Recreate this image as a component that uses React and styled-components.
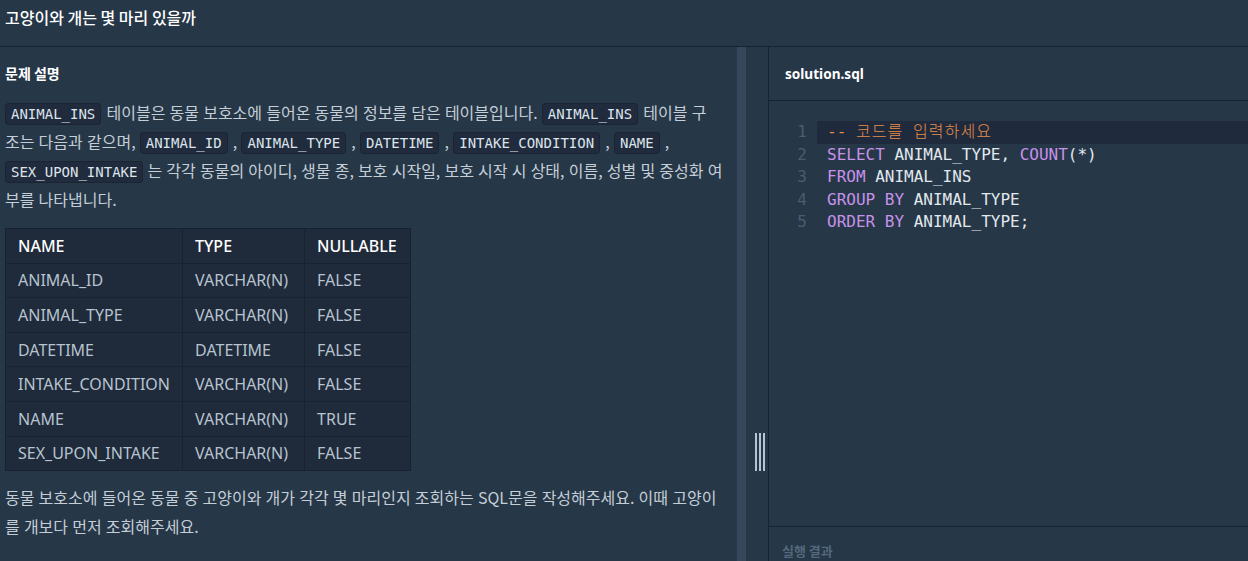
import React from "react";
import styled, { createGlobalStyle } from "styled-components";

const Global = createGlobalStyle`
  html, body { margin: 0; padding: 0; background: #263747; }
  body { font-family: "Noto Sans", "Noto Sans CJK KR", sans-serif; overflow: hidden; }
  * { box-sizing: border-box; }
`;

const Page = styled.div`
  width: 1248px;
  height: 561px;
  background: #263747;
  display: flex;
  flex-direction: column;
  overflow: hidden;
  color: #d5dde5;
`;

const TopBar = styled.header`
  height: 47px;
  flex: none;
  display: flex;
  align-items: center;
  padding: 0 5px 12px;
  border-bottom: 1px solid #172334;
`;

const Title = styled.h1`
  margin: 0;
  font-size: 16px;
  font-weight: 500;
  color: #ffffff;
  font-family: "Noto Sans CJK KR", sans-serif;
`;

const Main = styled.div`
  flex: 1;
  display: flex;
  min-height: 0;
`;

const LeftPane = styled.section`
  width: 737px;
  flex: none;
  padding: 14px 0 0 5px;
  overflow: hidden;
`;

const ScrollThumb = styled.div`
  width: 9px;
  flex: none;
  background: #36465b;
`;

const Divider = styled.div`
  width: 23px;
  flex: none;
  border-right: 1px solid #172334;
  display: flex;
  justify-content: center;
  padding-top: 386px;
  padding-left: 5px;
`;

const Grip = styled.div`
  display: flex;
  gap: 2px;
  height: 38px;
`;

const GripBar = styled.span`
  width: 2px;
  height: 100%;
  background: #b4c6d4;
`;

const SectionTitle = styled.h2`
  margin: 0 0 13px;
  font-size: 14px;
  font-weight: 700;
  color: #ffffff;
  line-height: 24px;
  font-family: "Noto Sans CJK KR", sans-serif;
`;

const Para = styled.p`
  margin: 0;
  font-size: 16px;
  line-height: 29px;
  color: #c5ced7;
  font-family: "Noto Sans CJK KR", sans-serif;
  width: 730px;
  word-spacing: 0.6px;
`;

const Code = styled.code`
  font-family: "DejaVu Sans Mono", monospace;
  font-size: 14px;
  line-height: 1;
  color: #dce4ec;
  background: #202b3d;
  border: 1px solid #1a2433;
  border-radius: 4px;
  padding: 2px 5px;
  word-spacing: 0;
  margin-right: ${(p) => (p.$gap ? "4px" : "1px")};
`;

const Table = styled.table`
  border-collapse: collapse;
  margin: 14px 0 12px;
  background: #1f2a3b;
  font-family: "Noto Sans", sans-serif;
  font-size: 16px;
`;

const Th = styled.th`
  text-align: left;
  font-weight: 500;
  color: #ffffff;
  border: 1px solid #172334;
  height: 34.6px;
  padding: 0 12px;
  width: ${(p) => p.$w}px;
`;

const Td = styled.td`
  color: #b7c4cf;
  border: 1px solid #172334;
  height: 34.6px;
  padding: 0 12px;
`;

const RightPane = styled.section`
  flex: 1;
  display: flex;
  flex-direction: column;
  min-width: 0;
`;

const TabBar = styled.div`
  height: 54px;
  flex: none;
  border-bottom: 1px solid #172334;
  display: flex;
  align-items: center;
  padding: 0 0 0 16px;
`;

const TabName = styled.span`
  font-size: 13.6px;
  font-weight: 700;
  color: #ffffff;
  font-family: "Noto Sans", sans-serif;
`;

const Editor = styled.div`
  flex: 1;
  padding-top: 20px;
  font-family: "DejaVu Sans Mono", "Noto Sans CJK KR", monospace;
  font-size: 16px;
  line-height: 22.5px;
`;

const Line = styled.div`
  display: flex;
  height: 22.5px;
  align-items: center;
`;

const LineNo = styled.span`
  width: 38px;
  flex: none;
  text-align: right;
  color: #4a5d70;
`;

const LineText = styled.span`
  flex: 1;
  height: 100%;
  margin-left: 10px;
  padding-left: 10px;
  white-space: pre;
  background: ${(p) => (p.$active ? "#1f2b3c" : "transparent")};
  color: #e2e8ee;
`;

const Kw = styled.span`
  color: #c792ea;
`;

const Comment = styled.span`
  color: #e88b4a;
`;

const Hangul = styled.span`
  letter-spacing: 1.1px;
  font-weight: 300;
`;

const Results = styled.div`
  height: 35px;
  flex: none;
  border-top: 1px solid #172334;
  padding: 12px 0 0 13px;
`;

const ResultsLabel = styled.span`
  font-size: 13px;
  font-weight: 700;
  color: #53687c;
  font-family: "Noto Sans CJK KR", sans-serif;
`;

const rows = [
  ["ANIMAL_ID", "VARCHAR(N)", "FALSE"],
  ["ANIMAL_TYPE", "VARCHAR(N)", "FALSE"],
  ["DATETIME", "DATETIME", "FALSE"],
  ["INTAKE_CONDITION", "VARCHAR(N)", "FALSE"],
  ["NAME", "VARCHAR(N)", "TRUE"],
  ["SEX_UPON_INTAKE", "VARCHAR(N)", "FALSE"],
];

export default function App() {
  return (
    <Page>
      <Global />
      <TopBar>
        <Title>고양이와 개는 몇 마리 있을까</Title>
      </TopBar>
      <Main>
        <LeftPane>
          <SectionTitle>문제 설명</SectionTitle>
          <Para>
            <Code>ANIMAL_INS</Code> 테이블은 동물 보호소에 들어온 동물의 정보를 담은 테이블입니다.{" "}
            <Code>ANIMAL_INS</Code> 테이블 구
            <br />
            조는 다음과 같으며, <Code>ANIMAL_ID</Code> , <Code>ANIMAL_TYPE</Code> ,{" "}
            <Code>DATETIME</Code> , <Code>INTAKE_CONDITION</Code> , <Code>NAME</Code> ,
            <br />
            <Code $gap>SEX_UPON_INTAKE</Code>는 각각 동물의 아이디, 생물 종, 보호 시작일, 보호 시작
            시 상태, 이름, 성별 및 중성화 여
            <br />
            부를 나타냅니다.
          </Para>
          <Table>
            <thead>
              <tr>
                <Th $w={176}>NAME</Th>
                <Th $w={122}>TYPE</Th>
                <Th $w={106}>NULLABLE</Th>
              </tr>
            </thead>
            <tbody>
              {rows.map((r) => (
                <tr key={r[0]}>
                  {r.map((c, i) => (
                    <Td key={i}>{c}</Td>
                  ))}
                </tr>
              ))}
            </tbody>
          </Table>
          <Para>
            동물 보호소에 들어온 동물 중 고양이와 개가 각각 몇 마리인지 조회하는 SQL문을
            작성해주세요. 이때 고양이
            <br />를 개보다 먼저 조회해주세요.
          </Para>
        </LeftPane>
        <ScrollThumb />
        <Divider>
          <Grip>
            <GripBar />
            <GripBar />
            <GripBar />
          </Grip>
        </Divider>
        <RightPane>
          <TabBar>
            <TabName>solution.sql</TabName>
          </TabBar>
          <Editor>
            <Line>
              <LineNo>1</LineNo>
              <LineText $active>
                <Comment>
                  -- <Hangul>코드를</Hangul> <Hangul>입력하세요</Hangul>
                </Comment>
              </LineText>
            </Line>
            <Line>
              <LineNo>2</LineNo>
              <LineText>
                <Kw>SELECT</Kw> ANIMAL_TYPE, <Kw>COUNT</Kw>(*)
              </LineText>
            </Line>
            <Line>
              <LineNo>3</LineNo>
              <LineText>
                <Kw>FROM</Kw> ANIMAL_INS
              </LineText>
            </Line>
            <Line>
              <LineNo>4</LineNo>
              <LineText>
                <Kw>GROUP BY</Kw> ANIMAL_TYPE
              </LineText>
            </Line>
            <Line>
              <LineNo>5</LineNo>
              <LineText>
                <Kw>ORDER BY</Kw> ANIMAL_TYPE;
              </LineText>
            </Line>
          </Editor>
          <Results>
            <ResultsLabel>실행 결과</ResultsLabel>
          </Results>
        </RightPane>
      </Main>
    </Page>
  );
}
